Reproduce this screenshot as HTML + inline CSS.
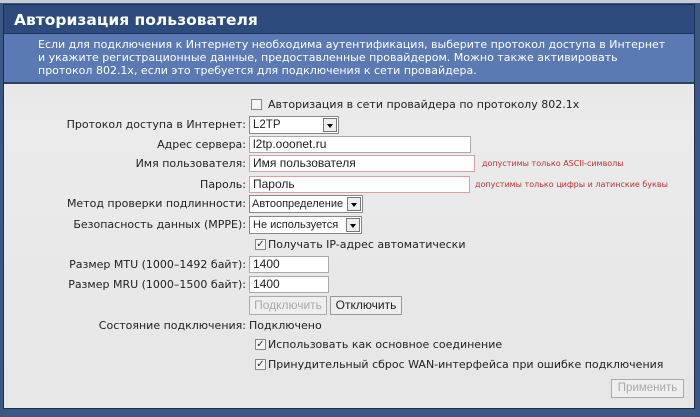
<!DOCTYPE html>
<html><head><meta charset="utf-8"><style>
*{margin:0;padding:0;box-sizing:border-box}
body{width:700px;height:417px;background:#3b5783;font-family:"DejaVu Sans","Liberation Sans",sans-serif;font-size:11px;color:#222;position:relative;overflow:hidden}
.top{position:absolute;left:0;top:0;width:700px;height:3px;background:#c9ccd2}
.panel{position:absolute;left:3px;top:4px;width:692px;height:405px;border:1px solid #1e2f4d;background:linear-gradient(#e2e2e2,#ebebeb 30%,#e6e6e6)}
.hdr{height:29px;background:#2d4b7d;color:#fff;font-weight:bold;font-size:15.5px;padding:6px 0 0 10px;border-bottom:1px solid #1e3258}
.desc{height:50px;background:#5b7ab3;color:#fff;font-size:11px;line-height:13px;padding:4px 0 0 34px;border-bottom:2px solid #2b416a}
.r{position:absolute;left:0;width:690px;height:18px;line-height:18px}
.l{position:absolute;right:448px;text-align:right;white-space:nowrap}
.v{position:absolute;left:243px;white-space:nowrap}
.in{position:absolute;height:17px;background:#fff;border:1px solid #aaa;font-family:"Liberation Sans",sans-serif;font-size:12px;line-height:15px;padding-left:3px}
.in.red{border-color:#d9a0a0;background:#fff}
.sel{position:absolute;height:18px;background:#fff;border:1px solid #888;font-family:"Liberation Sans",sans-serif;font-size:11.5px;line-height:16px;padding-left:3px;white-space:nowrap;overflow:hidden}
.sel i{position:absolute;right:1px;top:1px;width:14px;height:14px;border:1px solid #777;background:#eee;font-style:normal}
.sel i:after{content:"";position:absolute;left:3px;top:5px;border:3px solid transparent;border-top:4px solid #000}
.cb{position:absolute;width:11px;height:11px;border:1px solid #888;background:#f4f4f4;top:3px;font-size:10px;line-height:9px;text-align:center;color:#234}
.hint{position:absolute;font-size:8px;color:#b33}
.btn{position:absolute;height:19px;border:1px solid #aaa;background:#eee;font-family:"Liberation Sans",sans-serif;font-size:12px;line-height:17px;text-align:center}
.ct{font-size:11px}
</style></head><body>
<div class="top"></div>
<div class="panel">
<div class="hdr">Авторизация пользователя</div>
<div class="desc">Если для подключения к Интернету необходима аутентификация, выберите протокол доступа в Интернет<br>и укажите регистрационные данные, предоставленные провайдером. Можно также активировать<br>протокол 802.1х, если это требуется для подключения к сети провайдера.</div>

<div class="r" style="top:91px"><span class="cb" style="left:247px"></span><span class="v ct" style="left:264px">Авторизация в сети провайдера по протоколу 802.1x</span></div>
<div class="r" style="top:111px"><span class="l">Протокол доступа в Интернет:</span><div class="sel" style="left:245px;width:90px;top:0">L2TP<i></i></div></div>
<div class="r" style="top:131px"><span class="l">Адрес сервера:</span><div class="in" style="left:245px;width:222px;top:0">l2tp.ooonet.ru</div></div>
<div class="r" style="top:150px"><span class="l">Имя пользователя:</span><div class="in red" style="left:245px;width:226px;top:0">Имя пользователя</div><span class="hint" style="left:478px">допустимы только ASCII-символы</span></div>
<div class="r" style="top:171px"><span class="l">Пароль:</span><div class="in red" style="left:245px;width:221px;top:0">Пароль</div><span class="hint" style="left:471px">допустимы только цифры и латинские буквы</span></div>
<div class="r" style="top:190px"><span class="l">Метод проверки подлинности:</span><div class="sel" style="left:245px;width:114px;top:0;padding-left:2px;font-size:11px">Автоопределение<i></i></div></div>
<div class="r" style="top:211px"><span class="l">Безопасность данных (MPPE):</span><div class="sel" style="left:245px;width:113px;top:0;font-size:11px">Не используется<i></i></div></div>
<div class="r" style="top:231px"><span class="cb" style="left:251px">✓</span><span class="v ct" style="left:264px">Получать IP-адрес автоматически</span></div>
<div class="r" style="top:251px"><span class="l">Размер MTU (1000–1492 байт):</span><div class="in" style="left:245px;width:80px;top:0">1400</div></div>
<div class="r" style="top:271px"><span class="l">Размер MRU (1000–1500 байт):</span><div class="in" style="left:245px;width:80px;top:0">1400</div></div>
<div class="r" style="top:291px"><div class="btn" style="left:245px;width:78px;top:0;color:#aaa">Подключить</div><div class="btn" style="left:326px;width:72px;top:0;border-color:#999">Отключить</div></div>
<div class="r" style="top:312px"><span class="l">Состояние подключения:</span><span class="v" style="left:245px">Подключено</span></div>
<div class="r" style="top:331px"><span class="cb" style="left:251px">✓</span><span class="v ct" style="left:264px">Использовать как основное соединение</span></div>
<div class="r" style="top:351px"><span class="cb" style="left:251px">✓</span><span class="v ct" style="left:264px">Принудительный сброс WAN-интерфейса при ошибке подключения</span></div>
<div class="btn" style="left:607px;top:374px;width:73px;color:#aaa;font-size:11.5px">Применить</div>
</div>
</body></html>
